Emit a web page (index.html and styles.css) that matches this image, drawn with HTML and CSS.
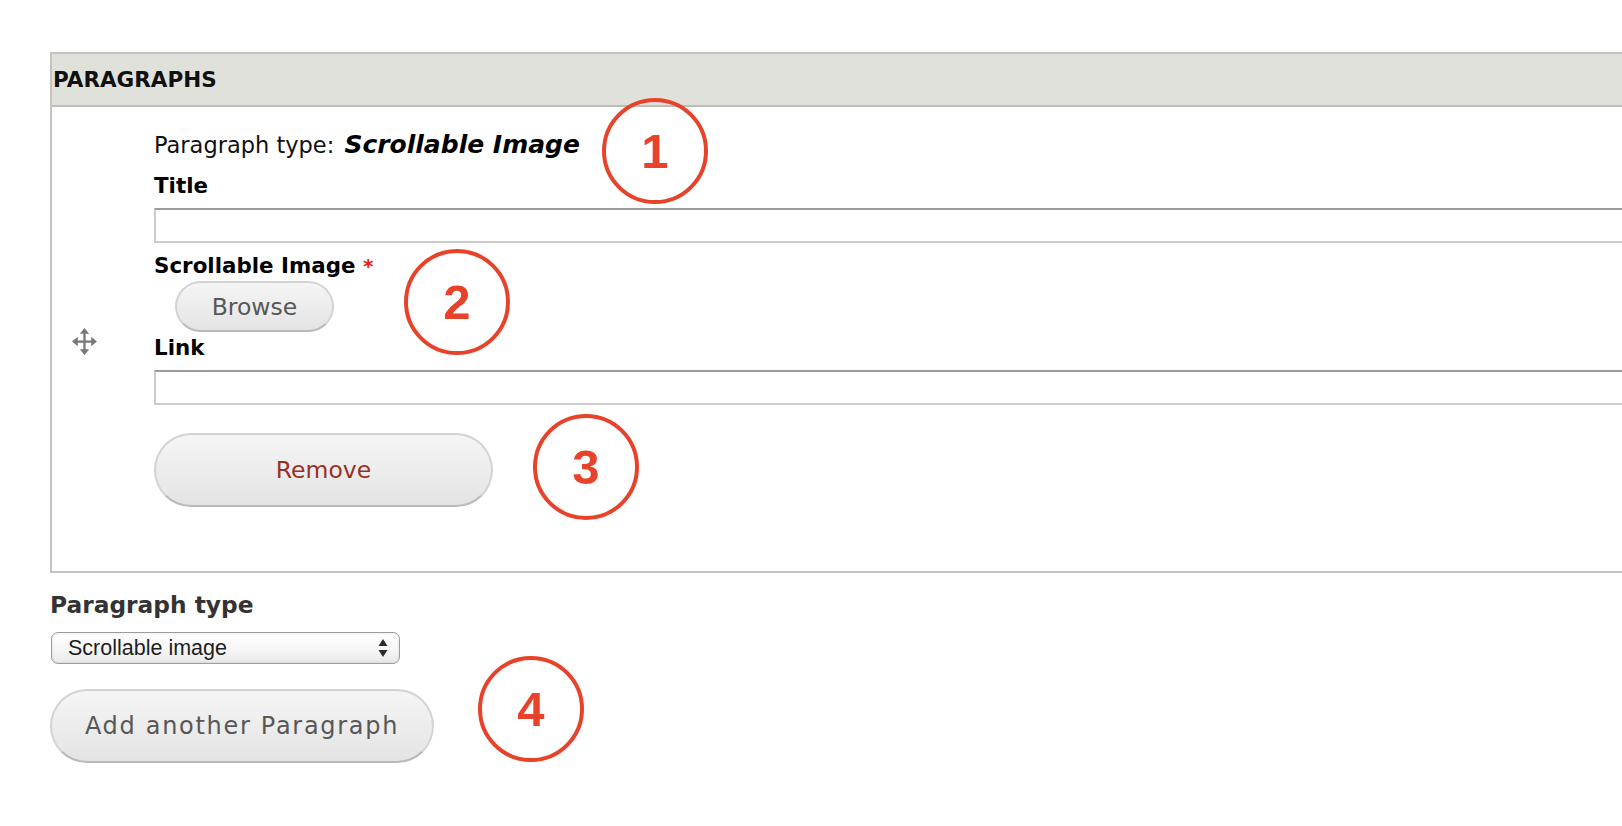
FILE: index.html
```html
<!DOCTYPE html>
<html lang="en">
<head>
<meta charset="utf-8">
<title>Paragraphs</title>
<link rel="stylesheet" href="styles.css">
</head>
<body>
<div class="page">
  <div class="fieldset">
    <div class="legend">PARAGRAPHS</div>
    <div class="row">
      <div class="handle">
        <svg width="25" height="27" viewBox="0 0 24 26" aria-hidden="true">
          <g fill="#777777">
            <rect x="3" y="12" width="18" height="2.2"/>
            <rect x="10.9" y="4" width="2.2" height="18"/>
            <polygon points="12,0 16.5,5.5 7.5,5.5"/>
            <polygon points="12,26 16.5,20.5 7.5,20.5"/>
            <polygon points="0,13 5.5,8.5 5.5,17.5"/>
            <polygon points="24,13 18.5,8.5 18.5,17.5"/>
          </g>
        </svg>
      </div>
      <div class="content">
        <div class="ptype">Paragraph type: <em>Scrollable Image</em></div>
        <label class="lbl lbl-first">Title</label>
        <input class="text" type="text">
        <label class="lbl lbl-img">Scrollable Image <span class="req">*</span></label>
        <div class="file"><button class="btn btn-browse" type="button">Browse</button></div>
        <label class="lbl lbl-link">Link</label>
        <input class="text" type="text">
        <button class="btn btn-remove" type="button">Remove</button>
      </div>
    </div>
  </div>

  <div class="add">
    <label class="add-label">Paragraph type</label>
    <div class="select-wrap">
      <select class="select">
        <option>Scrollable image</option>
      </select>
      <svg class="arrows" width="10" height="20" viewBox="0 0 10 20" aria-hidden="true">
        <polygon points="5,1 9.5,8 0.5,8" fill="#2b2b2b"/>
        <polygon points="5,19 9.5,12 0.5,12" fill="#2b2b2b"/>
      </svg>
    </div>
    <button class="btn btn-add" type="button">Add another Paragraph</button>
  </div>

  <div class="marker m1">1</div>
  <div class="marker m2">2</div>
  <div class="marker m3">3</div>
  <div class="marker m4">4</div>
</div>
</body>
</html>
```

FILE: styles.css
```css
html, body {
  margin: 0;
  padding: 0;
  background: #ffffff;
  overflow: hidden;
}

body {
  font-family: "DejaVu Sans", "Noto Sans", sans-serif;
  color: #000;
}

.page {
  position: relative;
  padding: 52px 0 0 50px;
  min-height: 826px;
  box-sizing: border-box;
}

.fieldset {
  border: 2px solid #c3c3bf;
  border-right: none;
}

.legend {
  background: #e1e1dc;
  border-bottom: 2px solid #bdbdb8;
  height: 51px;
  line-height: 52px;
  padding-left: 1px;
  font-weight: bold;
  font-size: 21.5px;
  color: #111;
}

.row {
  display: flex;
  align-items: stretch;
}

.handle {
  width: 102px;
  flex: 0 0 102px;
  box-sizing: border-box;
  padding-left: 20px;
  padding-top: 4px;
  display: flex;
  align-items: center;
}

.handle svg {
  display: block;
  filter: blur(0.3px);
}

.content {
  flex: 1;
  display: flex;
  flex-direction: column;
  align-items: flex-start;
  padding: 23px 0 64px 0;
}

.ptype {
  font-size: 22.5px;
  line-height: 30px;
  height: 30px;
  color: #111;
}

.ptype em {
  font-style: italic;
  font-weight: bold;
  font-size: 25px;
  color: #000;
  margin-left: 3px;
}

.lbl {
  display: block;
  font-weight: bold;
  font-size: 21.4px;
  line-height: 30px;
  height: 30px;
  color: #000;
}

.lbl-first { margin-top: 11px; }
.lbl-img { margin-top: 8px; }
.lbl-link { margin-top: 1px; }

.req {
  color: #e0241b;
  font-size: 20px;
}

.text {
  display: block;
  margin: 7px 0 0 0;
  width: 100%;
  height: 35px;
  box-sizing: border-box;
  border: 2px solid #cbcbcb;
  border-top-color: #9c9c9c;
  border-right: none;
  background: #fff;
  padding: 0;
  outline: none;
}

.btn {
  font-family: "DejaVu Sans", "Noto Sans", sans-serif;
  font-size: 23.5px;
  color: #575757;
  background: linear-gradient(to bottom, #f5f5f5 0%, #e4e4e4 100%);
  border: 2px solid #d3d3d3;
  border-bottom-color: #b9b9b9;
  border-radius: 60px;
  padding: 0;
  box-sizing: border-box;
  cursor: pointer;
  text-align: center;
}

.file {
  padding-left: 21px;
}

.btn-browse {
  width: 159px;
  height: 51px;
  display: block;
}

.btn-remove {
  margin-top: 28px;
  width: 339px;
  height: 74px;
  color: #993126;
}

.add {
  display: flex;
  flex-direction: column;
  align-items: flex-start;
}

.add-label {
  margin-top: 17px;
  font-weight: bold;
  font-size: 23.3px;
  line-height: 30px;
  height: 30px;
  color: #333;
}

.select-wrap {
  position: relative;
  margin-top: 12px;
  margin-left: 1px;
}

.select {
  -webkit-appearance: none;
  appearance: none;
  display: block;
  width: 349px;
  height: 32px;
  box-sizing: border-box;
  border: 1.5px solid #9d9d9d;
  border-radius: 7px;
  background: linear-gradient(to bottom, #ffffff 0%, #f6f6f6 55%, #e9e9e9 100%);
  box-shadow: inset 0 0 3px rgba(0,0,0,0.12);
  font-family: "Liberation Sans", Arial, sans-serif;
  font-size: 21.5px;
  color: #1e1e1e;
  padding: 0 0 0 16px;
  outline: none;
}

.arrows {
  position: absolute;
  right: 12px;
  top: 6px;
}

.btn-add {
  margin-top: 25px;
  width: 384px;
  height: 74px;
  font-size: 24px;
  letter-spacing: 1.7px;
}

.marker {
  position: absolute;
  width: 106px;
  height: 106px;
  box-sizing: border-box;
  border: 4px solid #e8432a;
  border-radius: 50%;
  display: flex;
  align-items: center;
  justify-content: center;
  font-family: "Liberation Sans", Arial, sans-serif;
  font-weight: bold;
  font-size: 49px;
  color: #e8432a;
  line-height: 1;
}

.m1 { left: 602px; top: 98px; }
.m2 { left: 404px; top: 249px; }
.m3 { left: 533px; top: 414px; }
.m4 { left: 478px; top: 656px; }
```
